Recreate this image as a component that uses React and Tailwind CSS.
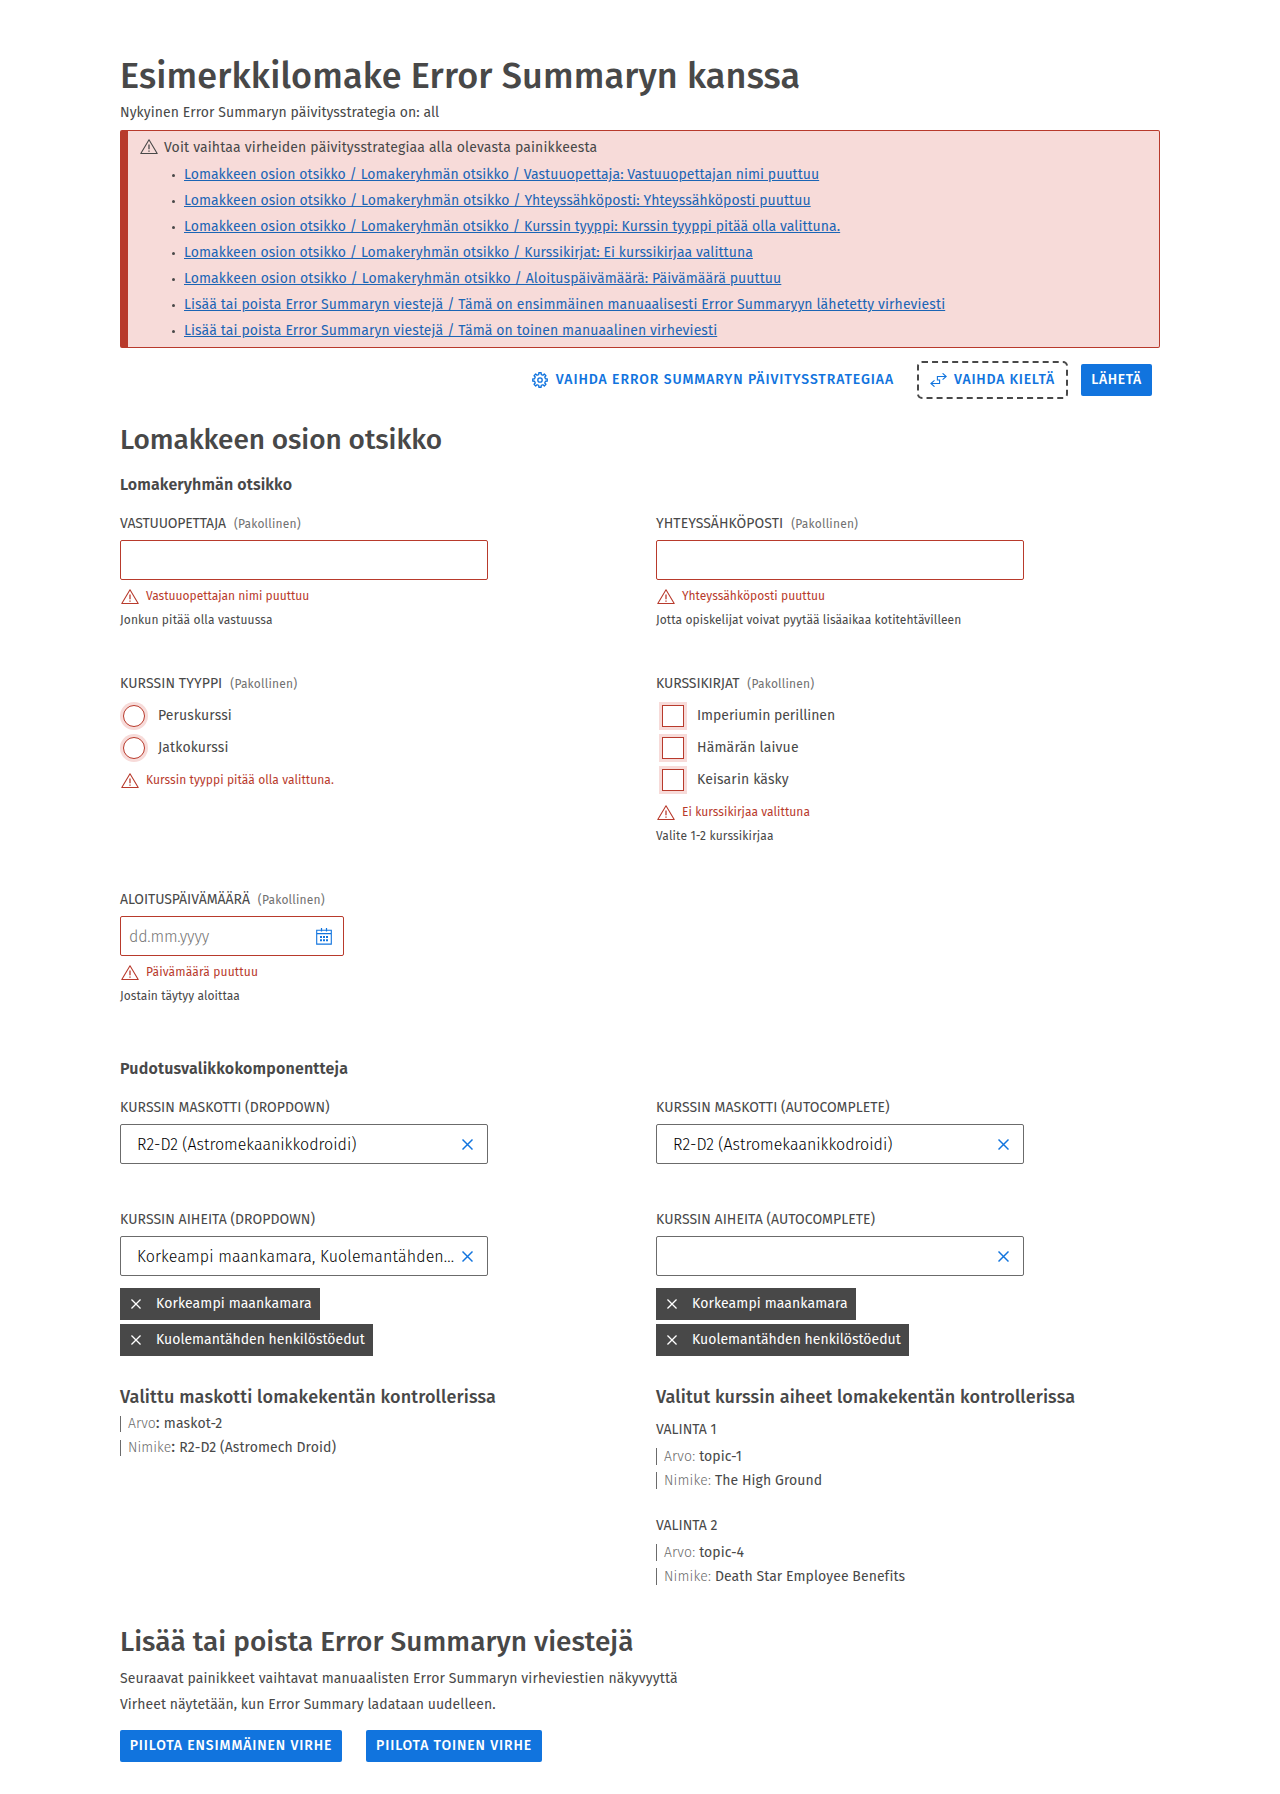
const errors = [
  ["Lomakkeen osion otsikko / Lomakeryhmän otsikko / Vastuuopettaja: Vastuuopettajan nimi puuttuu", "tracking-[0.05px]"],
  ["Lomakkeen osion otsikko / Lomakeryhmän otsikko / Yhteyssähköposti: Yhteyssähköposti puuttuu", "tracking-[0.065px]"],
  ["Lomakkeen osion otsikko / Lomakeryhmän otsikko / Kurssin tyyppi: Kurssin tyyppi pitää olla valittuna.", "tracking-[0.055px]"],
  ["Lomakkeen osion otsikko / Lomakeryhmän otsikko / Kurssikirjat: Ei kurssikirjaa valittuna", "tracking-[0.06px]"],
  ["Lomakkeen osion otsikko / Lomakeryhmän otsikko / Aloituspäivämäärä: Päivämäärä puuttuu", "tracking-[0.09px]"],
  ["Lisää tai poista Error Summaryn viestejä / Tämä on ensimmäinen manuaalisesti Error Summaryyn lähetetty virheviesti", "tracking-[0.1px]"],
  ["Lisää tai poista Error Summaryn viestejä / Tämä on toinen manuaalinen virheviesti", "tracking-[0.1px]"],
];

function AlertIcon({ className }) {
  return (
    <svg viewBox="0 0 18 16" fill="none" stroke="currentColor" className={className}>
      <path d="M9 .8 17.2 14.5H.8Z" strokeLinejoin="round" strokeWidth="1.1" />
      <path d="M9 5.6v4.6" strokeWidth="1.3" />
      <path d="M9 11.4v1.4" strokeWidth="1.3" />
    </svg>
  );
}

function GearIcon() {
  return (
    <svg viewBox="0 0 24 24" fill="none" stroke="currentColor" strokeWidth="2" strokeLinejoin="round" className="h-4 w-4">
      <path d="M10.11 3.82 10.28 1.14H13.72L13.89 3.82 16.45 4.88 18.47 3.1 20.9 5.53 19.12 7.55 20.18 10.11 22.86 10.28V13.72L20.18 13.89 19.12 16.45 20.9 18.47 18.47 20.9 16.45 19.12 13.89 20.18 13.72 22.86H10.28L10.11 20.18 7.55 19.12 5.53 20.9 3.1 18.47 4.88 16.45 3.82 13.89 1.14 13.72V10.28L3.82 10.11 4.88 7.55 3.1 5.53 5.53 3.1 7.55 4.88Z" />
      <circle cx="12" cy="12" r="3.3" />
    </svg>
  );
}

function SwapIcon() {
  return (
    <svg viewBox="0 0 17 14" fill="none" stroke="currentColor" strokeWidth="1.1" className="h-[14px] w-[17px]">
      <path d="M12.6.3 16.2 3.5l-3.6 3.2M16.2 3.5H7.4V7h2.2v3.5H.9M4.5 7.3.9 10.5l3.6 3.2" />
    </svg>
  );
}

function CalendarIcon() {
  return (
    <svg viewBox="0 0 16 17" fill="none" stroke="currentColor" className="h-[17px] w-4">
      <path d="M.7 2.2h14.6v13.9H.7ZM.7 5.6h14.6" strokeWidth="1.1" />
      <path d="M5.5 0v3.6M10.5 0v3.6" strokeWidth="1.2" />
      <path d="M4 9h2M7 9h2M10 9h2M4 12.2h2M7 12.2h2M10 12.2h2" strokeWidth="2" />
    </svg>
  );
}

function CloseIcon({ className }) {
  return (
    <svg viewBox="0 0 11 11" fill="none" stroke="currentColor" strokeWidth="1.45" className={className}>
      <path d="m.5.5 10 10M10.5.5l-10 10" />
    </svg>
  );
}

function Label({ children, required, tracking }) {
  return (
    <div className="flex h-7 items-baseline leading-6">
      <span className={`text-sm leading-6 ${tracking}`}>{children}</span>
      {required && <span className="ml-2 text-xs leading-6 tracking-[0.19px] text-[#717171]">(Pakollinen)</span>}
    </div>
  );
}

function FieldError({ children, tracking = "" }) {
  return (
    <div className="mt-1 flex h-6 items-start text-xs leading-6 text-[#b83a2c]">
      <AlertIcon className="mt-[5px] ml-px h-4 w-[18px]" />
      <span className={`ml-[7px] ${tracking}`}>{children}</span>
    </div>
  );
}

function Help({ children, tracking }) {
  return <p className={`text-xs leading-6 ${tracking}`}>{children}</p>;
}

function TextField({ label, labelTracking, error, errorTracking, help, helpTracking }) {
  return (
    <div>
      <Label required tracking={labelTracking}>{label}</Label>
      <div className="h-10 w-[368px] rounded-[2px] border border-[#b83a2c]" />
      <FieldError tracking={errorTracking}>{error}</FieldError>
      <Help tracking={helpTracking}>{help}</Help>
    </div>
  );
}

function SelectField({ label, value, valueTracking = "", chips }) {
  return (
    <div>
      <Label tracking="tracking-[0.04px]">{label}</Label>
      <div className="flex h-10 w-[368px] items-center rounded-[2px] border border-[#6b6b6b] pl-4 text-base font-light text-black">
        <span className={`w-[325px] pt-px whitespace-nowrap ${valueTracking}`}>{value}</span>
        <CloseIcon className="h-[11px] w-[11px] text-[#1174de]" />
      </div>
      {chips && (
        <div className="mt-3 flex flex-col items-start gap-1">
          <Chip className="w-[200px] tracking-[0.09px]">Korkeampi maankamara</Chip>
          <Chip className="w-[253px]">Kuolemantähden henkilöstöedut</Chip>
        </div>
      )}
    </div>
  );
}

function Chip({ children, className }) {
  return (
    <div className={`flex h-8 items-start bg-[#484848] pl-[11px] text-sm leading-6 whitespace-nowrap text-white ${className}`}>
      <CloseIcon className="mt-[11px] h-[10px] w-[10px]" />
      <span className="ml-[15px] pt-1">{children}</span>
    </div>
  );
}

function Radio({ children }) {
  return (
    <div className="flex h-8 items-center">
      <span className="ml-[3px] h-[22px] w-[22px] rounded-full border border-[#b83a2c] bg-white ring-3 ring-[#f7dbd9]" />
      <span className="ml-[13px] pb-px text-sm tracking-[0.1px]">{children}</span>
    </div>
  );
}

function Checkbox({ children, tracking = "" }) {
  return (
    <div className="flex h-8 items-center">
      <span className="ml-[6px] h-[22px] w-[22px] border border-[#b83a2c] bg-white ring-3 ring-[#f7dbd9]" />
      <span className={`ml-[13px] pb-px text-sm ${tracking}`}>{children}</span>
    </div>
  );
}

function Topic({ title, value, label }) {
  return (
    <div className="text-sm tracking-[0.07px]">
      <div className="leading-6 tracking-normal">{title}</div>
      <div className="mt-[6px] border-l border-[#6b6b6b] pl-[7px] leading-[17px]">
        <span className="font-light tracking-[0.12px] text-[#6b6b6b]">Arvo: </span>
        {value}
      </div>
      <div className="mt-[7px] border-l border-[#6b6b6b] pl-[7px] leading-[17px]">
        <span className="font-light tracking-[0.12px] text-[#6b6b6b]">Nimike: </span>
        {label}
      </div>
    </div>
  );
}

function Button({ children, className }) {
  return (
    <button className={`flex h-8 items-center justify-center rounded-[2px] bg-[#1174de] text-sm leading-8 font-medium whitespace-nowrap text-white ${className}`}>
      {children}
    </button>
  );
}

export default function App() {
  return (
    <main className="h-[1794px] w-[1280px] bg-white px-[120px] pt-[52px] font-['Fira_Sans','Noto_Sans',sans-serif] text-[#484848]">
      <h1 className="h-[48px] text-4xl leading-[48px] font-medium tracking-[0.13px]">Esimerkkilomake Error Summaryn kanssa</h1>
      <p className="text-sm leading-[26px] tracking-[0.07px]">Nykyinen Error Summaryn päivitysstrategia on: all</p>

      <section className="mt-[4px] h-[218px] rounded-[2px] border border-l-8 border-[#b83a2c] bg-[#f7dbd9] pt-1 text-sm leading-[26px]">
        <div className="flex h-[27px] items-start">
          <AlertIcon className="mt-1 ml-[11.5px] h-4 w-[18px]" />
          <span className="ml-[6.5px] tracking-[0.165px]">Voit vaihtaa virheiden päivitysstrategiaa alla olevasta painikkeesta</span>
        </div>
        <ul>
          {errors.map(([text, tracking]) => (
            <li key={text} className="flex items-center pl-[44px]">
              <span className="h-[3px] w-[3px] rounded-full bg-[#484848]" />
              <a className={`ml-[9px] text-[#1b65b5] underline ${tracking}`}>{text}</a>
            </li>
          ))}
        </ul>
      </section>

      <div className="mt-[13px] flex h-[38px] items-center justify-end pr-2 text-sm font-medium text-[#1174de]">
        <GearIcon />
        <span className="ml-[8px] tracking-[0.91px]">VAIHDA ERROR SUMMARYN PÄIVITYSSTRATEGIAA</span>
        <div className="ml-[23px] flex h-[38px] w-[151px] items-center rounded-[5px] border-2 border-dashed border-[#484848] pl-[11px]">
          <SwapIcon />
          <span className="ml-[7px] tracking-[0.78px]">VAIHDA KIELTÄ</span>
        </div>
        <Button className="ml-[13px] w-[71px] tracking-[0.6px]">LÄHETÄ</Button>
      </div>

      <h2 className="mt-[22px] h-[36px] text-[28px] leading-[38px] font-medium tracking-[-0.07px]">Lomakkeen osion otsikko</h2>
      <h3 className="mt-4 h-6 text-base leading-6 font-semibold tracking-[0.1px]">Lomakeryhmän otsikko</h3>

      <div className="mt-[15px] grid grid-cols-2 gap-x-8 gap-y-10">
        <TextField
          label="VASTUUOPETTAJA"
          labelTracking="tracking-[-0.16px]"
          error="Vastuuopettajan nimi puuttuu"
          help="Jonkun pitää olla vastuussa"
          helpTracking="tracking-[0.13px]"
        />
        <TextField
          label="YHTEYSSÄHKÖPOSTI"
          labelTracking="tracking-[0.07px]"
          error="Yhteyssähköposti puuttuu"
          errorTracking="tracking-[0.05px]"
          help="Jotta opiskelijat voivat pyytää lisäaikaa kotitehtävilleen"
          helpTracking="tracking-[0.08px]"
        />
        <div>
          <Label required tracking="tracking-[0.07px]">KURSSIN TYYPPI</Label>
          <Radio>Peruskurssi</Radio>
          <Radio>Jatkokurssi</Radio>
          <FieldError tracking="tracking-[0.06px]">Kurssin tyyppi pitää olla valittuna.</FieldError>
        </div>
        <div>
          <Label required tracking="tracking-[-0.1px]">KURSSIKIRJAT</Label>
          <Checkbox tracking="tracking-[-0.04px]">Imperiumin perillinen</Checkbox>
          <Checkbox tracking="tracking-[0.16px]">Hämärän laivue</Checkbox>
          <Checkbox tracking="tracking-[0.14px]">Keisarin käsky</Checkbox>
          <FieldError tracking="tracking-[0.05px]">Ei kurssikirjaa valittuna</FieldError>
          <Help tracking="tracking-[0.15px]">Valite 1-2 kurssikirjaa</Help>
        </div>
        <div>
          <Label required tracking="tracking-[-0.05px]">ALOITUSPÄIVÄMÄÄRÄ</Label>
          <div className="flex h-10 w-[224px] items-center justify-between rounded-[2px] border border-[#b83a2c] pr-[11px] pl-2">
            <span className="pt-0.5 text-base font-light tracking-[-0.2px] text-[#757575]">dd.mm.yyyy</span>
            <span className="text-[#1174de]"><CalendarIcon /></span>
          </div>
          <FieldError tracking="tracking-[0.15px]">Päivämäärä puuttuu</FieldError>
          <Help tracking="tracking-[0.07px]">Jostain täytyy aloittaa</Help>
        </div>
      </div>

      <h3 className="mt-[49px] h-6 text-base leading-6 font-semibold tracking-[0.17px]">Pudotusvalikkokomponentteja</h3>
      <div className="mt-[15px] grid grid-cols-2 gap-x-8 gap-y-11">
        <SelectField label="KURSSIN MASKOTTI (DROPDOWN)" value="R2-D2 (Astromekaanikkodroidi)" />
        <SelectField label="KURSSIN MASKOTTI (AUTOCOMPLETE)" value="R2-D2 (Astromekaanikkodroidi)" />
        <SelectField label="KURSSIN AIHEITA (DROPDOWN)" value="Korkeampi maankamara, Kuolemantähden..." valueTracking="tracking-[0.12px]" chips />
        <SelectField label="KURSSIN AIHEITA (AUTOCOMPLETE)" value="" chips />
      </div>

      <div className="mt-[29px] grid h-[239px] grid-cols-2 gap-x-8">
        <div>
          <h4 className="text-lg leading-6 font-medium tracking-[0.16px]">Valittu maskotti lomakekentän kontrollerissa</h4>
          <div className="mt-[7px] h-4 border-l border-[#6b6b6b] pl-[7px] text-base leading-[14px]">
            <span className="text-sm leading-[14px] font-light text-[#6b6b6b]">Arvo</span>
            {": "}
            <span className="text-sm leading-[14px] tracking-[0.15px]">maskot-2</span>
          </div>
          <div className="mt-2 h-4 border-l border-[#6b6b6b] pl-[7px] text-base leading-[14px]">
            <span className="text-sm leading-[14px] font-light text-[#6b6b6b]">Nimike</span>
            {": "}
            <span className="text-sm leading-[14px] tracking-[0.08px]">R2-D2 (Astromech Droid)</span>
          </div>
        </div>
        <div>
          <h4 className="text-lg leading-6 font-medium tracking-[0.13px]">Valitut kurssin aiheet lomakekentän kontrollerissa</h4>
          <div className="mt-[9px] flex flex-col gap-[25px]">
            <Topic title="VALINTA 1" value="topic-1" label="The High Ground" />
            <Topic title="VALINTA 2" value="topic-4" label="Death Star Employee Benefits" />
          </div>
        </div>
      </div>

      <h2 className="h-[42px] text-[28px] leading-[36px] font-medium tracking-[0.03px]">Lisää tai poista Error Summaryn viestejä</h2>
      <div className="text-sm leading-[26px]">
        <p className="tracking-[0.11px]">Seuraavat painikkeet vaihtavat manuaalisten Error Summaryn virheviestien näkyvyyttä</p>
        <p className="tracking-[0.06px]">Virheet näytetään, kun Error Summary ladataan uudelleen.</p>
      </div>
      <div className="mt-[12px] flex gap-6">
        <Button className="w-[222px] tracking-[0.88px]">PIILOTA ENSIMMÄINEN VIRHE</Button>
        <Button className="w-[176px] tracking-[0.88px]">PIILOTA TOINEN VIRHE</Button>
      </div>
    </main>
  );
}
